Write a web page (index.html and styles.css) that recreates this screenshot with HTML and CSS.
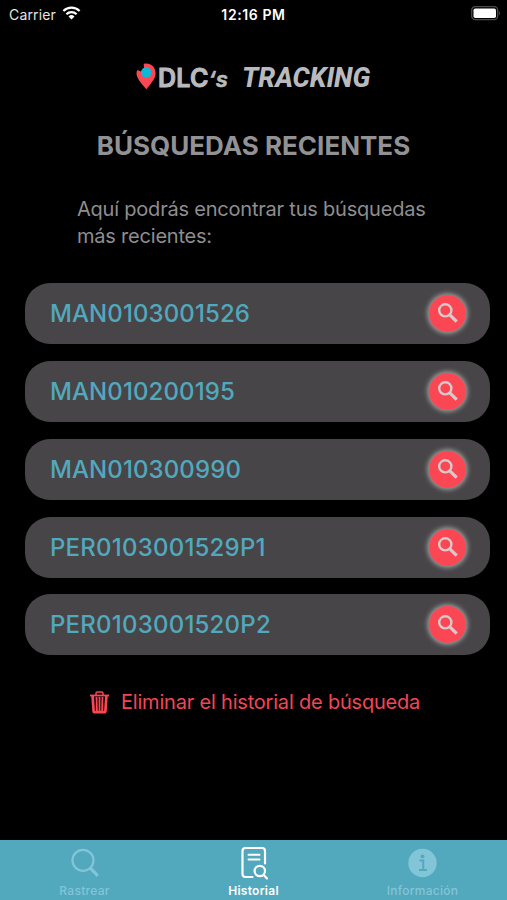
FILE: index.html
```html
<!DOCTYPE html>
<html lang="es">
<head>
<meta charset="utf-8">
<title>DLC's Tracking</title>
<link rel="stylesheet" href="styles.css">
</head>
<body>
<svg width="0" height="0" class="defs">
  <symbol id="glass" viewBox="0 0 20 20"><circle cx="7.300" cy="7.300" r="6.100" fill="none" stroke="currentColor" stroke-width="2.400"/><path d="M11.800 11.800l6.900 6.900" stroke="currentColor" stroke-width="3.200"/></symbol>
</svg>
<div class="app">
  <header class="status">
    <div class="left"><span class="carrier">Carrier</span>
      <svg class="wifi" width="19" height="14" viewBox="0 0 18 14"><g fill="none" stroke="#fff" stroke-width="2.2"><path d="M.9 5A11.600 11.600 0 0 1 17.100 5"/><path d="M3.900 8.200A7.300 7.300 0 0 1 14.100 8.200"/></g><path d="M6 10.500a4.300 4.300 0 0 1 6 0l-3 3z" fill="#fff"/></svg>
    </div>
    <span class="time">12:16 PM</span>
    <div class="right"><svg width="30" height="15" viewBox="0 0 30 15"><rect x=".7" y=".7" width="26" height="13" rx="3.600" fill="none" stroke="#4c4c4e" stroke-width="1.300"/><rect x="2.500" y="2.500" width="22.500" height="9.500" rx="1.800" fill="#fff"/><path d="M28 5q2 2.200 0 4.500z" fill="#4c4c4e"/></svg></div>
  </header>
  <div class="logo">
    <svg class="pin" width="20" height="27" viewBox="0 0 20 27"><path d="M10.200 26.300C5.500 20 .5 15.500.5 10.200C.5 9 .8 7.900 1.500 7L5 8.600L8 5.500L7.700.9C14.500-.7 19.600 4.300 19.600 10.200C19.600 15.500 15 20.500 10.200 26.300Z" fill="#fb4653"/><circle cx="10.200" cy="9.500" r="5.200" fill="#0cb8d3"/></svg>
    <span class="dlc">DLC<span class="ap">‘s</span></span><span class="tracking">TRACKING</span>
  </div>
  <h1>BÚSQUEDAS RECIENTES</h1>
  <p class="intro">Aquí podrás encontrar tus búsquedas<br>más recientes:</p>
  <main class="list">
    <div class="card"><span>MAN0103001526</span><button class="go"><svg width="20" height="20"><use href="#glass"/></svg></button></div>
    <div class="card"><span>MAN010200195</span><button class="go"><svg width="20" height="20"><use href="#glass"/></svg></button></div>
    <div class="card"><span>MAN010300990</span><button class="go"><svg width="20" height="20"><use href="#glass"/></svg></button></div>
    <div class="card per"><span>PER0103001529P1</span><button class="go"><svg width="20" height="20"><use href="#glass"/></svg></button></div>
    <div class="card per"><span>PER0103001520P2</span><button class="go"><svg width="20" height="20"><use href="#glass"/></svg></button></div>
  </main>
  <div class="clear">
    <svg width="19" height="23" viewBox="0 0 19 23" fill="none" stroke="#fb4653"><path d="M0 4.500h19" stroke-width="1.800"/><path d="M6 4V2.300Q6 1 7.300 1h4.400Q13 1 13 2.300V4" stroke-width="1.500"/><path d="M2.600 5L3.600 19.800Q3.700 21.200 5 21.200H14Q15.300 21.200 15.400 19.800L16.400 5" stroke-width="2.700"/><path d="M6.500 6l.4 14M9.500 6v14M12.500 6l-.4 14" stroke-width="1.800"/></svg>
    <span>Eliminar el historial de búsqueda</span>
  </div>
  <nav class="tabs">
    <a class="tab"><svg width="30" height="30" viewBox="0 0 30 30" fill="none" stroke="currentColor"><circle cx="13" cy="12.300" r="10.500" stroke-width="2.200"/><path d="M20.200 19.800l7.600 8" stroke-width="3.200"/></svg><span class="t1">Rastrear</span></a>
    <a class="tab active"><svg width="30" height="34" viewBox="0 0 30 34" fill="none" stroke="currentColor" stroke-width="2.200" stroke-linecap="round"><path d="M13.500 31H6.500Q3.500 31 3.500 28V5Q3.500 2 6.500 2H23Q26 2 26 5V17.500"/><path d="M9.500 8.700h11M9.500 13.500h11" stroke-width="2"/><circle cx="20.800" cy="25" r="5.200"/><path d="M24.700 29l3.300 3.500"/></svg><span class="t2">Historial</span></a>
    <a class="tab"><svg width="30" height="30" viewBox="0 0 30 30"><circle cx="14.500" cy="15" r="14.200" fill="currentColor"/><g fill="none" stroke="#52a8bc" stroke-width="2"><path d="M11.500 12.500h3.800v9.200M11 22h8"/></g><circle cx="14.500" cy="8.300" r="1.900" fill="#52a8bc"/></svg><span class="t3">Información</span></a>
  </nav>
</div>
</body>
</html>
```
FILE: styles.css
```css
* { box-sizing: border-box; }
body { margin: 0; background: #000; font-family: Inter, "Liberation Sans", sans-serif; }
.defs { position: absolute; }
.app { width: 507px; height: 900px; display: flex; flex-direction: column; overflow: hidden; }
.status { height: 28px; flex: none; display: grid; grid-template-columns: 1fr auto 1fr; align-items: center; color: #fff; padding: 0 6px 0 9px; font-size: 14px; }
.left { display: flex; align-items: center; gap: 6px; }
.wifi { margin-top: -2px; }
.carrier { color: #e4e4e4; letter-spacing: .15px; }
.time { font-weight: 600; letter-spacing: .6px; margin-left: -3px; }
.right { display: flex; justify-content: flex-end; }
.right svg { margin-top: -1px; }
.logo { height: 32px; margin: 34px 0 0 136px; display: flex; align-items: center; color: #b9babd; white-space: nowrap; }
.pin { margin-top: -4px; }
.dlc { width: 72px; margin-left: 2px; font: 600 25px/32px Inter, sans-serif; letter-spacing: .2px; -webkit-text-stroke: 1px #b9babd; }
.ap { font-style: italic; font-size: 22px; -webkit-text-stroke-width: .6px; }
.tracking { margin-left: 12px; font: italic 800 27px/32px Roboto, sans-serif; letter-spacing: -.05px; }
h1 { margin: 36px 0 0; color: #929294; font-size: 26px; line-height: 32px; font-weight: 700; text-align: center; white-space: nowrap; }
.intro { margin: 33px 0 0 77px; padding-top: .5px; color: #8e8e90; font-size: 20px; line-height: 27px; white-space: nowrap; letter-spacing: -.21px; }
.list { display: flex; flex-direction: column; gap: 16.900px; margin: 33.400px 17px 0 25px; }
.card { height: 61px; border-radius: 25px; background: #474547; display: flex; align-items: center; justify-content: space-between; padding: 0 24px 0 25px; color: #52a8bc; font-size: 24px; font-weight: 500; letter-spacing: .1px; }
.per { letter-spacing: .22px; }
.go { width: 37px; height: 37px; padding: 0; border: 0; border-radius: 50%; background: #fb4653; box-shadow: 0 0 5px 1.500px #a5a5a5; color: #d5cbcd; display: flex; align-items: center; justify-content: center; }
.clear { display: flex; align-items: center; margin: 32px 0 0 90px; height: 30px; gap: 12px; color: #ef4756; font-size: 20px; white-space: nowrap; letter-spacing: -.2px; }
.tabs { margin-top: auto; height: 60px; background: #52a8bc; display: grid; grid-template-columns: repeat(3, 1fr); }
.tab { display: flex; flex-direction: column; align-items: center; justify-content: space-between; padding: 8px 0 2px; color: #83c5d8; font-size: 12px; line-height: 15px; font-weight: 500; letter-spacing: .28px; }
.active { color: #fff; font-weight: 600; padding-top: 6px; }
```
